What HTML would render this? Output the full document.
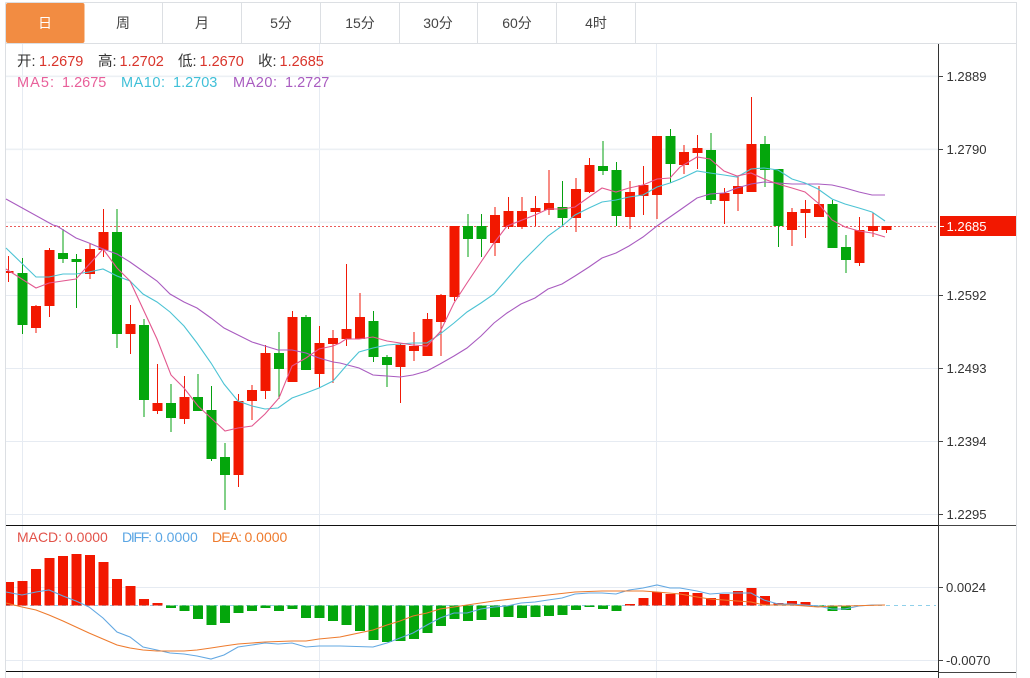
<!DOCTYPE html>
<html><head><meta charset="utf-8"><style>
html,body{margin:0;padding:0;background:#fff;width:1030px;height:678px;overflow:hidden}
svg{display:block}
text{font-family:"Liberation Sans","Noto Sans CJK SC",sans-serif;font-size:14.5px}
.t{font-size:14px;fill:#444;text-anchor:middle}
.a{font-size:13.1px;fill:#333}
.m{font-size:14px}
</style></head><body>
<svg width="1030" height="678" viewBox="0 0 1030 678" xmlns="http://www.w3.org/2000/svg">
<rect width="1030" height="678" fill="#fff"/>
<!-- frame -->
<path d="M5.5 2.5H1016.5V678M5.5 2.5V678M6 43.5H1016" fill="none" stroke="#dcdfe3" stroke-width="1"/>
<path d="M162.5 3V43M241.5 3V43M320.5 3V43M399.5 3V43M477.5 3V43M556.5 3V43M635.5 3V43" stroke="#dcdfe3" stroke-width="1"/>
<rect x="6" y="3" width="78.5" height="40" rx="2" fill="#f28c42"/>
<text class="t" x="45" y="28" style="fill:#fff">日</text>
<text class="t" x="123" y="28">周</text>
<text class="t" x="202" y="28">月</text>
<text class="t" x="281" y="28">5分</text>
<text class="t" x="360" y="28">15分</text>
<text class="t" x="438" y="28">30分</text>
<text class="t" x="517" y="28">60分</text>
<text class="t" x="596" y="28">4时</text>
<!-- grid -->
<path d="M6 295.5H938M6 368.5H938M6 441.5H938M6 514.5H938M6 587.5H938M6 660.5H938M22.5 44V678M319.5 44V678M656.5 44V678" fill="none" stroke="#e6ebf2" stroke-width="1"/>
<path d="M6 76.3H938M6 149.3H938M6 222.3H938" fill="none" stroke="#ecf0f4" stroke-width="1.6"/>
<path d="M6 226.5H938" stroke="#ea5a5a" stroke-width="1" stroke-dasharray="2 2"/>
<!-- candle wicks -->
<path fill="none" stroke="#f01a08" stroke-width="1" d="M8.5 256V282M36 305V333M49.5 248V317M90 243V279M103.5 209V257M130.5 305V354M157.5 364V414M184.5 376V424M238.5 394V487M252 385V420M265.5 345V399M292.5 311V382M319.5 326V388M333 330V383M346.5 264V346M360 293V339M400.5 344V403M414 332V361M427.5 313V356M441 294V356M454.5 226V301M495 207V256M508.5 197V229M522 197V229M535.5 196V226M549 170V215M576 178V232M589.5 158V193M630 181V229M643.5 166V215M657 136V219M684 145V174M697.5 135V169M724.5 188V224M738 177V211M751.5 97V192M792 208V246M805.5 200V238M819 186V217M859.5 217V266M873 213V237M886.5 226V233"/>
<path fill="none" stroke="#05a010" stroke-width="1" d="M22.5 258V334M63 229V263M76.5 254V308M117 209V348M144 319V417M171 384V432M198 374V411M211.5 386V461M225 443V510M279 332V399M306 315V370M373.5 311V362M387 355V387M468 214V257M481.5 214V257M562.5 181V226M603 141V175M616.5 162V226M670.5 129V183M711 133V204M765 136V187M778.5 169V247M832.5 200V248M846 235V273"/>
<!-- candle bodies -->
<path fill="#f21800" d="M6 271h7.5V273H6zM31 306h10V328h-10zM44.5 250h10V306h-10zM85 249h10V274h-10zM98.5 232h10V250h-10zM125.5 324h10V334h-10zM152.5 403h10V411h-10zM179.5 397h10V419h-10zM233.5 401h10V475h-10zM247 390h10V401h-10zM260.5 353h10V391h-10zM287.5 317h10V382h-10zM314.5 343h10V374h-10zM328 338h10V344h-10zM341.5 329h10V339h-10zM355 317h10V339h-10zM395.5 345h10V367h-10zM409 346h10V351h-10zM422.5 319h10V356h-10zM436 295h10V322h-10zM449.5 226h10V297h-10zM490 215h10V243h-10zM503.5 211h10V227h-10zM517 211h10V227h-10zM530.5 208h10V212h-10zM544 203h10V210h-10zM571 189h10V218h-10zM584.5 165h10V192h-10zM625 192h10V217h-10zM638.5 185h10V196h-10zM652 136h10V195h-10zM679 152h10V165h-10zM692.5 148h10V153h-10zM719.5 193h10V201h-10zM733 186h10V194h-10zM746.5 144h10V192h-10zM787 212h10V230h-10zM800.5 209h10V213h-10zM814 204h10V217h-10zM854.5 230h10V263h-10zM868 226h10V231h-10zM881.5 226h10V230h-10z"/>
<path fill="#04a60c" d="M17.5 273h10V325h-10zM58 253h10V259h-10zM71.5 259h10V262h-10zM112 232h10V334h-10zM139 325h10V400h-10zM166 403h10V418h-10zM193 397h10V411h-10zM206.5 410h10V459h-10zM220 457h10V475h-10zM274 353h10V369h-10zM301 317h10V370h-10zM368.5 321h10V357h-10zM382 357h10V365h-10zM463 226h10V239h-10zM476.5 226h10V239h-10zM557.5 207h10V218h-10zM598 166h10V171h-10zM611.5 170h10V216h-10zM665.5 136h10V164h-10zM706 150h10V200h-10zM760 144h10V170h-10zM773.5 169h10V226h-10zM827.5 204h10V248h-10zM841 247h10V260h-10z"/>
<!-- MA lines -->
<polyline fill="none" stroke="#a95cc0" stroke-width="1.1" points="6,199 53,225 57,226 76,238 89,243 103,249 117,254 130,262 157,281 170,294 184,302 197,308 211,318 224,328 238,335 252,342 265,346 278,350 292,350 306,353 319,358 333,362 340,363 359,368 373,375 387,376 400,377 413,375 427,371 440,364 454,356 467,348 481,336 494,323 507,313 521,304 535,298 548,289 562,284 575,276 589,267 602,258 616,253 629,246 643,237 657,226 680,210 697,198 710,194 724,193 737,188 751,184 764,182 778,183 792,184 805,184 818,184 832,185 845,188 859,192 872,195 885,195"/>
<polyline fill="none" stroke="#4cc3d4" stroke-width="1.1" points="6,248 36,277 49,277 63,274 76,274 89,272 103,269 117,276 130,281 143,294 157,302 170,312 184,326 197,343 211,363 224,384 238,401 252,406 265,409 278,408 292,398 306,393 319,388 333,381 340,373 346,366 359,352 373,348 387,345 400,344 413,343 427,343 440,334 454,323 467,312 481,303 494,294 507,279 521,263 535,249 548,236 562,226 575,215 589,208 602,202 616,200 629,197 643,195 657,187 670,183 680,179 697,171 710,173 724,175 737,177 751,169 764,168 778,170 792,179 805,183 818,189 832,199 845,204 859,208 872,212 885,221"/>
<polyline fill="none" stroke="#e2588f" stroke-width="1.1" points="6,269 36,288 49,283 76,279 103,249 117,268 130,281 157,339 171,375 184,388 198,406 211,418 225,431 238,428 252,426 265,414 279,398 292,366 306,358 319,349 333,346 340,343 346,339 359,339 373,337 387,341 400,343 413,345 427,346 440,332 454,303 467,283 481,262 494,243 507,226 535,215 548,209 562,209 575,207 589,197 602,188 616,192 629,188 643,185 657,179 670,178 680,167 697,157 710,159 724,171 737,176 751,173 764,179 778,184 792,188 805,192 818,203 832,220 845,227 859,231 872,233 885,237"/>
<!-- MACD -->
<path d="M6 605.5H936" stroke="#8fd0ea" stroke-width="1" stroke-dasharray="4 4"/>
<path fill="#f21800" d="M6 582h8V605.5H6zM17.5 581h10V605.5h-10zM31 569h10V605.5h-10zM44.5 558h10V605.5h-10zM58 556h10V605.5h-10zM71.5 554h10V605.5h-10zM85 555h10V605.5h-10zM98.5 562h10V605.5h-10zM112 579h10V605.5h-10zM125.5 586h10V605.5h-10zM139 599h10V605.5h-10zM152.5 603h10V605.5h-10zM625 604h10V605.5h-10zM638.5 598h10V605.5h-10zM652 592h10V605.5h-10zM665.5 594h10V605.5h-10zM679 592h10V605.5h-10zM692.5 593h10V605.5h-10zM706 598h10V605.5h-10zM719.5 594h10V605.5h-10zM733 591h10V605.5h-10zM746.5 588h10V605.5h-10zM760 596h10V605.5h-10zM773.5 603h10V605.5h-10zM787 601h10V605.5h-10zM800.5 602h10V605.5h-10z"/>
<path fill="#04a60c" d="M166 605.5h10V608h-10zM179.5 605.5h10V611h-10zM193 605.5h10V619h-10zM206.5 605.5h10V625h-10zM220 605.5h10V623h-10zM233.5 605.5h10V613h-10zM247 605.5h10V611h-10zM260.5 605.5h10V608h-10zM274 605.5h10V611h-10zM287.5 605.5h10V609h-10zM301 605.5h10V618h-10zM314.5 605.5h10V618h-10zM328 605.5h10V621h-10zM341.5 605.5h10V625h-10zM355 605.5h10V631h-10zM368.5 605.5h10V640h-10zM382 605.5h10V642h-10zM395.5 605.5h10V641h-10zM409 605.5h10V639h-10zM422.5 605.5h10V633h-10zM436 605.5h10V626h-10zM449.5 605.5h10V619h-10zM463 605.5h10V621h-10zM476.5 605.5h10V620h-10zM490 605.5h10V617h-10zM503.5 605.5h10V617h-10zM517 605.5h10V618h-10zM530.5 605.5h10V617h-10zM544 605.5h10V616h-10zM557.5 605.5h10V615h-10zM571 605.5h10V610h-10zM584.5 605.5h10V607h-10zM598 605.5h10V609h-10zM611.5 605.5h10V611h-10zM814 605.5h10V606.5h-10zM827.5 605.5h10V611h-10zM841 605.5h10V610h-10z"/>
<polyline fill="none" stroke="#63a8e2" stroke-width="1.1" points="6,592 22,595 36,592 49,590 63,596 76,601 89,607 103,618 117,632 130,637 143,647 157,650 170,653 184,654 197,656 211,659 224,655 238,647 252,645 265,643 278,644 292,643 306,647 319,646 340,646 373,647 387,643 400,638 413,633 427,625 440,618 454,613 467,613 481,609 494,607 507,606 521,603 535,602 548,600 562,598 575,594 589,593 602,593 616,594 629,590 643,588 657,585 670,588 680,588 697,591 710,594 724,593 737,593 751,593 764,600 778,604 792,604 805,605 818,606 832,609 845,609 859,606 872,605 885,605"/>
<polyline fill="none" stroke="#ee7b2e" stroke-width="1.1" points="6,603 22,607 36,610 49,615 63,621 76,627 89,633 103,639 117,645 130,648 143,650 157,651 170,651 184,651 197,650 211,648 224,646 238,644 252,643 265,642 292,641 306,641 319,639 340,637 373,630 387,625 400,621 413,616 427,613 440,609 454,607 467,605 494,601 521,598 548,595 575,592 602,591 629,591 643,591 657,592 680,594 697,597 710,599 724,600 737,601 751,602 764,605 792,605 818,607 832,606 845,606 885,605"/>
<!-- separators -->
<path d="M6 525.5H938M6 671.5H938" stroke="#111" stroke-width="1"/>
<path d="M938 525.5H1016M938 672.5H1016" stroke="#444" stroke-width="1"/>
<path d="M938.5 44V678" stroke="#333" stroke-width="1"/>
<!-- axis -->
<path d="M939 76.5H943M939 149.5H943M939 295.5H943M939 368.5H943M939 441.5H943M939 514.5H943M939 587.5H943M939 660.5H943" stroke="#444" stroke-width="1"/>
<rect x="940" y="216" width="76" height="20" fill="#f21800"/>
<path d="M940 226.5H944" stroke="#fff" stroke-width="1"/>
<text class="a" x="946.5" y="81">1.2889</text>
<text class="a" x="946.5" y="154">1.2790</text>
<text class="a" x="946.5" y="231" style="fill:#fff">1.2685</text>
<text class="a" x="946.5" y="300">1.2592</text>
<text class="a" x="946.5" y="373">1.2493</text>
<text class="a" x="946.5" y="446">1.2394</text>
<text class="a" x="946.5" y="519">1.2295</text>
<text class="a" x="946" y="592">0.0024</text>
<text class="a" x="946" y="665">-0.0070</text>
<!-- info -->
<text x="17" y="66" fill="#333" font-size="14">开:</text><text x="39" y="66" fill="#d9342b">1.2679</text>
<text x="98" y="66" fill="#333">高:</text><text x="119.5" y="66" fill="#d9342b">1.2702</text>
<text x="178" y="66" fill="#333">低:</text><text x="199.5" y="66" fill="#d9342b">1.2670</text>
<text x="258" y="66" fill="#333">收:</text><text x="279.5" y="66" fill="#d9342b">1.2685</text>
<text x="17" y="87" fill="#e8609a" textLength="37">MA5:</text><text x="62" y="87" fill="#e8609a">1.2675</text>
<text x="121" y="87" fill="#40c0d8" textLength="44">MA10:</text><text x="173" y="87" fill="#40c0d8">1.2703</text>
<text x="233" y="87" fill="#a95cc0" textLength="44">MA20:</text><text x="285" y="87" fill="#a95cc0">1.2727</text>
<text class="m" x="17" y="542" fill="#e2534a" textLength="45">MACD:</text><text class="m" x="65" y="542" fill="#e2534a">0.0000</text>
<text class="m" x="122" y="542" fill="#5ba6e4" textLength="30">DIFF:</text><text class="m" x="155" y="542" fill="#5ba6e4">0.0000</text>
<text class="m" x="212" y="542" fill="#ee7b2e" textLength="30">DEA:</text><text class="m" x="244.5" y="542" fill="#ee7b2e">0.0000</text>
</svg>
</body></html>
